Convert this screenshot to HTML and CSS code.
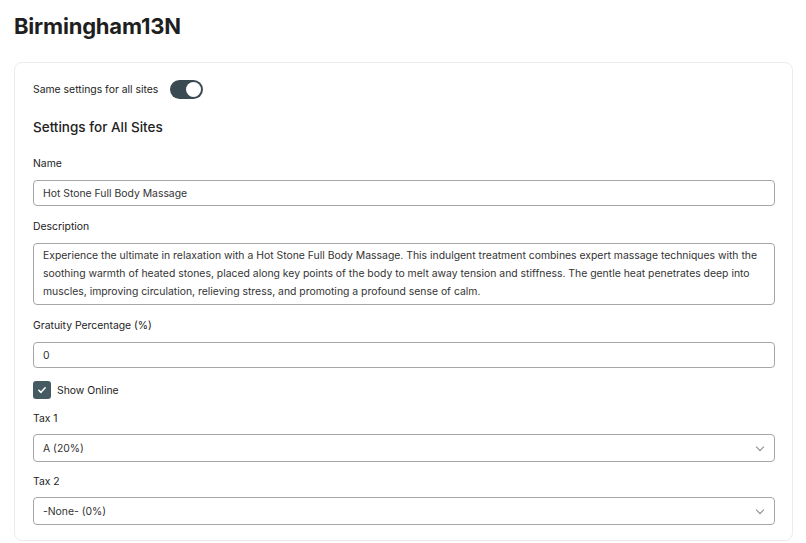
FILE: index.html
```html
<!DOCTYPE html>
<html lang="en">

<head>
    <meta charset="UTF-8">
    <meta name="viewport" content="width=device-width, initial-scale=1.0">
    <title>Birmingham13N</title>
    <link rel="stylesheet" href="styles.css">
</head>

<body>
    <h1 class="page-title">Birmingham13N</h1>

    <div class="card">
        <div class="switch-row">
            <span>Same settings for all sites</span>
            <label class="switch">
                <input type="checkbox" checked>
                <span class="slider"></span>
            </label>
        </div>

        <h3 class="section-title">Settings for All Sites</h3>

        <div class="field">
            <label for="name">Name</label>
            <input type="text" id="name" value="Hot Stone Full Body Massage">
        </div>

        <div class="field">
            <label for="description">Description</label>
            <textarea id="description" rows="3">Experience the ultimate in relaxation with a Hot Stone Full Body Massage. This indulgent treatment combines expert massage techniques with the soothing warmth of heated stones, placed along key points of the body to melt away tension and stiffness. The gentle heat penetrates deep into muscles, improving circulation, relieving stress, and promoting a profound sense of calm.</textarea>
        </div>

        <div class="field tight">
            <label for="gratuity">Gratuity Percentage (%)</label>
            <input type="text" id="gratuity" value="0">
        </div>

        <label class="check-row">
            <input type="checkbox" checked>
            <span class="box">
                <svg viewBox="0 0 12 12" width="10" height="10">
                    <path d="M2.2 6.3 L4.8 8.8 L9.8 3.4" fill="none" stroke="#fff" stroke-width="1.9"
                        stroke-linecap="round" stroke-linejoin="round" />
                </svg>
            </span>
            Show Online
        </label>

        <div class="field tight select-field">
            <label for="tax1">Tax 1</label>
            <div class="select-wrap">
                <select id="tax1">
                    <option>A (20%)</option>
                    <option>-None- (0%)</option>
                </select>
            </div>
        </div>

        <div class="field last select-field">
            <label for="tax2">Tax 2</label>
            <div class="select-wrap">
                <select id="tax2">
                    <option>-None- (0%)</option>
                    <option>A (20%)</option>
                </select>
            </div>
        </div>
    </div>
</body>

</html>
```

FILE: styles.css
```css
* {
    margin: 0;
    padding: 0;
    box-sizing: border-box;
    font-family: Inter, "Noto Sans", sans-serif;
}

body {
    background: #fff;
    color: #222;
    padding: 11px 13px 0 14px;
}

.page-title {
    font-size: 22px;
    font-weight: 700;
    line-height: 30px;
    color: #1f1f1f;
    letter-spacing: -0.2px;
}

.card {
    margin-top: 21px;
    border: 1px solid #ececec;
    border-radius: 8px;
    padding: 17px 17px 15px 18px;
}

.switch-row {
    display: flex;
    align-items: center;
    gap: 12px;
    font-size: 10.4px;
    height: 19px;
}

.switch {
    position: relative;
    display: inline-block;
    width: 33px;
    height: 19px;
}

.switch input {
    display: none;
}

.slider {
    position: absolute;
    inset: 0;
    background: #3a4a52;
    border-radius: 10px;
}

.slider::after {
    content: "";
    position: absolute;
    top: 2px;
    right: 2px;
    width: 15px;
    height: 15px;
    border-radius: 50%;
    background: #fff;
}

.section-title {
    font-size: 13.5px;
    font-weight: 500;
    line-height: 18px;
    margin: 19px 0 21px;
    color: #222;
}

.field {
    margin-bottom: 14px;
}

.field.tight {
    margin-bottom: 13px;
}

.field.last {
    margin-bottom: 0;
}

.field label {
    display: block;
    font-size: 10.4px;
    line-height: 14px;
    margin-bottom: 9px;
    color: #222;
}

.select-field label {
    margin-bottom: 8px;
}

input[type="text"],
textarea,
select {
    width: 100%;
    border: 1px solid #a6a6a6;
    border-radius: 4px;
    font-size: 10.4px;
    color: #333;
    background: #fff;
    outline: none;
}

input[type="text"] {
    height: 26px;
    padding: 0 9px;
}

textarea {
    display: block;
    height: 62px;
    padding: 3px 9px;
    line-height: 18px;
    resize: none;
    overflow: hidden;
}

.select-wrap {
    position: relative;
}

.select-wrap::after {
    content: "";
    position: absolute;
    right: 12px;
    top: 10px;
    width: 5px;
    height: 5px;
    border-right: 1px solid #888;
    border-bottom: 1px solid #888;
    transform: rotate(45deg);
    pointer-events: none;
}

select {
    appearance: none;
    height: 28px;
    padding: 0 9px;
}

.check-row {
    display: flex;
    align-items: center;
    gap: 6px;
    font-size: 10.4px;
    height: 18px;
    margin-bottom: 13px;
    cursor: pointer;
}

.check-row input {
    display: none;
}

.box {
    width: 18px;
    height: 18px;
    border-radius: 3px;
    background: #465a63;
    display: flex;
    align-items: center;
    justify-content: center;
}
```
